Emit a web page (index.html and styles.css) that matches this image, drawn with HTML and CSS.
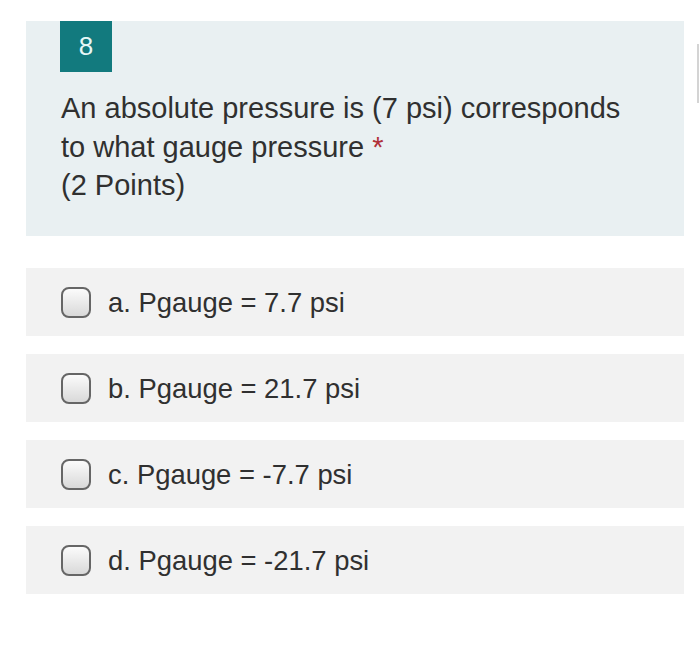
FILE: index.html
```html
<!DOCTYPE html>
<html>
<head>
<meta charset="utf-8">
<link rel="stylesheet" href="styles.css">
</head>
<body>
<div class="page">
  <div class="question">
    <div class="badge">8</div>
    <div class="qtext">An absolute pressure is (7 psi) corresponds<br>to what gauge pressure <span class="req">*</span><br>(2 Points)</div>
  </div>
  <div class="options">
    <div class="option"><span class="box"></span><span class="label">a. Pgauge = 7.7 psi</span></div>
    <div class="option"><span class="box"></span><span class="label">b. Pgauge = 21.7 psi</span></div>
    <div class="option"><span class="box"></span><span class="label">c. Pgauge = -7.7 psi</span></div>
    <div class="option"><span class="box"></span><span class="label">d. Pgauge = -21.7 psi</span></div>
  </div>
  <div class="edge"></div>
</div>
</body>
</html>
```

FILE: styles.css
```css
html, body {
  margin: 0;
  padding: 0;
  background: #ffffff;
}
body {
  font-family: "Liberation Sans", Arial, sans-serif;
  color: #333333;
}
.page {
  position: relative;
  width: 700px;
  height: 648px;
  padding: 21px 16px 0 26px;
  box-sizing: border-box;
}
.question {
  background: #e9f0f2;
  padding: 0 35px 34px 34px;
  height: 215px;
  box-sizing: border-box;
}
.badge {
  width: 52px;
  height: 51px;
  background: #127a7e;
  color: #e6f7f7;
  font-size: 26px;
  display: flex;
  align-items: center;
  justify-content: center;
}
.qtext {
  margin-top: 17px;
  margin-left: 1px;
  font-size: 29px;
  line-height: 38.5px;
  color: #303030;
}
.req {
  color: #b0303a;
}
.options {
  margin-top: 32px;
  display: flex;
  flex-direction: column;
  gap: 18px;
}
.option {
  height: 68px;
  background: #f2f2f2;
  display: flex;
  align-items: center;
  padding-left: 35px;
  gap: 17px;
}
.box {
  width: 30px;
  height: 31px;
  box-sizing: border-box;
  border: 2px solid #666666;
  border-radius: 8px;
  background: linear-gradient(#fbfbfb, #d9d9d9);
  margin-top: 1px;
}
.label {
  font-size: 27.4px;
  color: #303030;
  margin-top: 2px;
}
.edge {
  position: absolute;
  left: 697px;
  top: 44px;
  width: 2px;
  height: 59px;
  background: #d4d4d4;
}
```
